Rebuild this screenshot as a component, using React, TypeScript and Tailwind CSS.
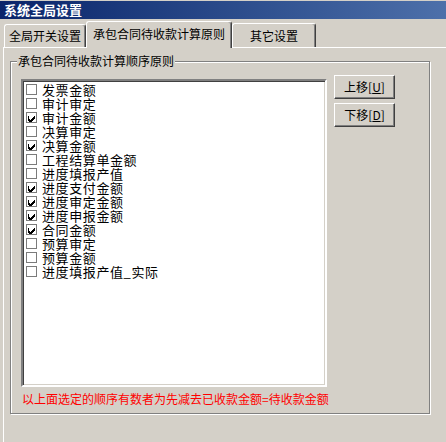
import React from "react";

const items: { label: string; checked: boolean }[] = [
  { label: "发票金额", checked: false },
  { label: "审计审定", checked: false },
  { label: "审计金额", checked: true },
  { label: "决算审定", checked: false },
  { label: "决算金额", checked: true },
  { label: "工程结算单金额", checked: false },
  { label: "进度填报产值", checked: false },
  { label: "进度支付金额", checked: true },
  { label: "进度审定金额", checked: true },
  { label: "进度申报金额", checked: true },
  { label: "合同金额", checked: true },
  { label: "预算审定", checked: false },
  { label: "预算金额", checked: false },
  { label: "进度填报产值_实际", checked: false },
];

function CheckBox({ checked }: { checked: boolean }) {
  return (
    <div className="w-[11px] h-[11px] border border-[#7b7b7b] bg-white shrink-0 flex items-center justify-center">
      {checked && (
        <svg width="9" height="9" viewBox="0 0 9 9" shapeRendering="crispEdges">
          <path d="M1 3h1v3h1v1h1v-1h1v-1h1v-1h1v-1h1v3h-1v1h-1v1h-1v1h-1v1h-1v-1h-1v-1h-1z" fill="#000" />
        </svg>
      )}
    </div>
  );
}

function Tab({ label, active, className }: { label: string; active?: boolean; className: string }) {
  return (
    <div
      className={`${className} flex items-center justify-center bg-[#d4d0c8] border-t border-l border-white border-r border-r-[#404040] rounded-t-[3px] shadow-[inset_-1px_0_0_#808080] text-[12px] leading-[14px] text-black ${
        active ? "relative z-10 -mb-px pb-[2px]" : ""
      }`}
    >
      {label}
    </div>
  );
}

function Button({ label, hot }: { label: string; hot: string }) {
  return (
    <button className="w-[61px] h-[24px] bg-[#d4d0c8] border border-t-white border-l-white border-r-[#404040] border-b-[#404040] shadow-[inset_-1px_-1px_0_#808080] text-[12px] leading-[14px] text-black flex items-center justify-center">
      {label}[<span className="underline">{hot}</span>]
    </button>
  );
}

export default function App() {
  return (
    <div className="w-[446px] h-[442px] bg-[#d4d0c8] overflow-hidden flex flex-col font-['Noto_Sans_CJK_SC',sans-serif]">
      <div className="mt-px h-[18px] bg-linear-to-r from-[#0a246a] to-[#4d70aa] flex items-center pl-[4px]">
        <span className="text-white font-bold text-[13px] leading-[14px]">系统全局设置</span>
      </div>

      <div className="h-[28px] flex items-end pl-[4px]">
        <Tab label="全局开关设置" className="w-[82px] h-[23px]" />
        <Tab label="承包合同待收款计算原则" active className="w-[146px] h-[27px]" />
        <Tab label="其它设置" className="w-[84px] h-[24px]" />
      </div>

      <div className="flex-1 ml-[3px] border-t border-l border-white">
        <div className="relative ml-[6px] mt-[13px] w-[420px] h-[353px] border border-[#808080] shadow-[1px_1px_0_#fff,inset_1px_1px_0_#fff]">
          <span className="absolute top-[-8px] left-[6px] px-[1px] bg-[#d4d0c8] text-[12px] leading-[14px] text-black">
            承包合同待收款计算顺序原则
          </span>

          <div className="pl-[10px] pt-[13px]">
            <div className="flex items-start">
              <div className="mt-[4px] w-[306px] h-[308px] bg-white border-2 border-t-[#808080] border-l-[#808080] border-b-white border-r-white shadow-[inset_1px_1px_0_#404040,inset_-1px_-1px_0_#d4d0c8] pl-[3px] pt-[1px]">
                {items.map((item) => (
                  <div key={item.label} className="h-[14px] flex items-center">
                    <CheckBox checked={item.checked} />
                    <span className="ml-[5px] text-[13px] leading-[13px] tracking-[0.6px] text-black whitespace-nowrap">
                      {item.label}
                    </span>
                  </div>
                ))}
              </div>
              <div className="ml-[7px] flex flex-col gap-[4px]">
                <Button label="上移" hot="U" />
                <Button label="下移" hot="D" />
              </div>
            </div>
            <p className="mt-[4px] pl-[1px] text-[12px] leading-[16px] text-[#ff0000]">
              以上面选定的顺序有数者为先减去已收款金额=待收款金额
            </p>
          </div>
        </div>
      </div>
    </div>
  );
}
